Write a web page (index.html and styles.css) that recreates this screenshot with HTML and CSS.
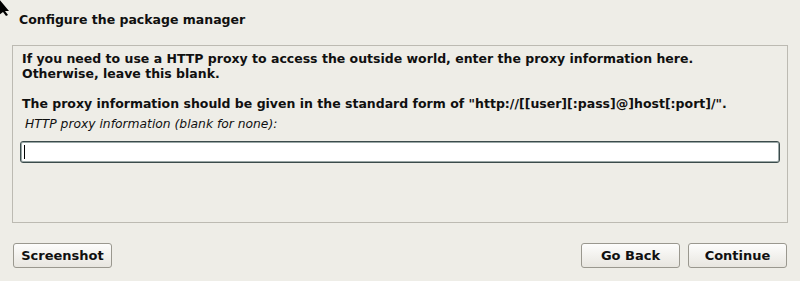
FILE: index.html
```html
<!DOCTYPE html>
<html>
<head>
<meta charset="utf-8">
<link rel="stylesheet" href="styles.css">
</head>
<body>
<div class="screen">
  <svg class="pointer" width="12" height="16" viewBox="0 0 12 16"><path d="M-1 -1 L9 11 L5 11 L8 15 L6 16 L3 12 L-1 15 Z" fill="#000"/></svg>
  <h1 class="title">Configure the package manager</h1>
  <div class="panel">
    <p class="para">If you need to use a HTTP proxy to access the outside world, enter the proxy information here.<br>Otherwise, leave this blank.</p>
    <p class="para">The proxy information should be given in the standard form of "http://[[user][:pass]@]host[:port]/".</p>
    <div class="label">HTTP proxy information (blank for none):</div>
    <div class="entry"><span class="caret"></span></div>
  </div>
  <div class="actions">
    <button class="btn">Screenshot</button>
    <div class="spacer"></div>
    <button class="btn">Go Back</button>
    <button class="btn">Continue</button>
  </div>
</div>
</body>
</html>
```

FILE: styles.css
```css
html, body {
  margin: 0;
  padding: 0;
  background: #eeede7;
}
.screen {
  position: relative;
  width: 800px;
  height: 281px;
  overflow: hidden;
  font-family: "DejaVu Sans", sans-serif;
  color: #101010;
}
.pointer {
  position: absolute;
  left: 0;
  top: 0;
}
.title {
  margin: 0;
  padding: 12px 0 0 19px;
  height: 45px;
  box-sizing: border-box;
  font-size: 12.5px;
  font-weight: bold;
  line-height: 15px;
}
.panel {
  margin-left: 12px;
  width: 776px;
  height: 178px;
  box-sizing: border-box;
  border: 1px solid #bcbab2;
  padding: 5px 0 0 9px;
}
.para {
  margin: 0 0 15px 0;
  font-size: 12.5px;
  font-weight: bold;
  line-height: 15px;
}
.para + .para {
  margin-bottom: 6px;
}
.label {
  margin-left: 3px;
  font-size: 12.3px;
  font-style: italic;
  line-height: 15px;
}
.entry {
  margin: 9px 0 0 -2px;
  width: 760px;
  height: 22px;
  box-sizing: border-box;
  background: #ffffff;
  border: 1px solid #3b4b4b;
  border-radius: 3px;
  box-shadow: inset 0 0 0 1px #9aa7a6;
  padding: 3px 0 0 3px;
}
.caret {
  display: block;
  width: 1px;
  height: 14px;
  background: #000;
}
.actions {
  display: flex;
  gap: 8px;
  padding: 20px 13px 0 13px;
}
.spacer {
  flex: 1;
}
.btn {
  width: 99px;
  height: 25px;
  box-sizing: border-box;
  padding: 0;
  font-family: "DejaVu Sans", sans-serif;
  font-size: 13px;
  font-weight: bold;
  color: #101010;
  border: 1px solid #9a988f;
  border-radius: 3px;
  background: linear-gradient(#fdfdfc, #e8e6e0);
}
```
